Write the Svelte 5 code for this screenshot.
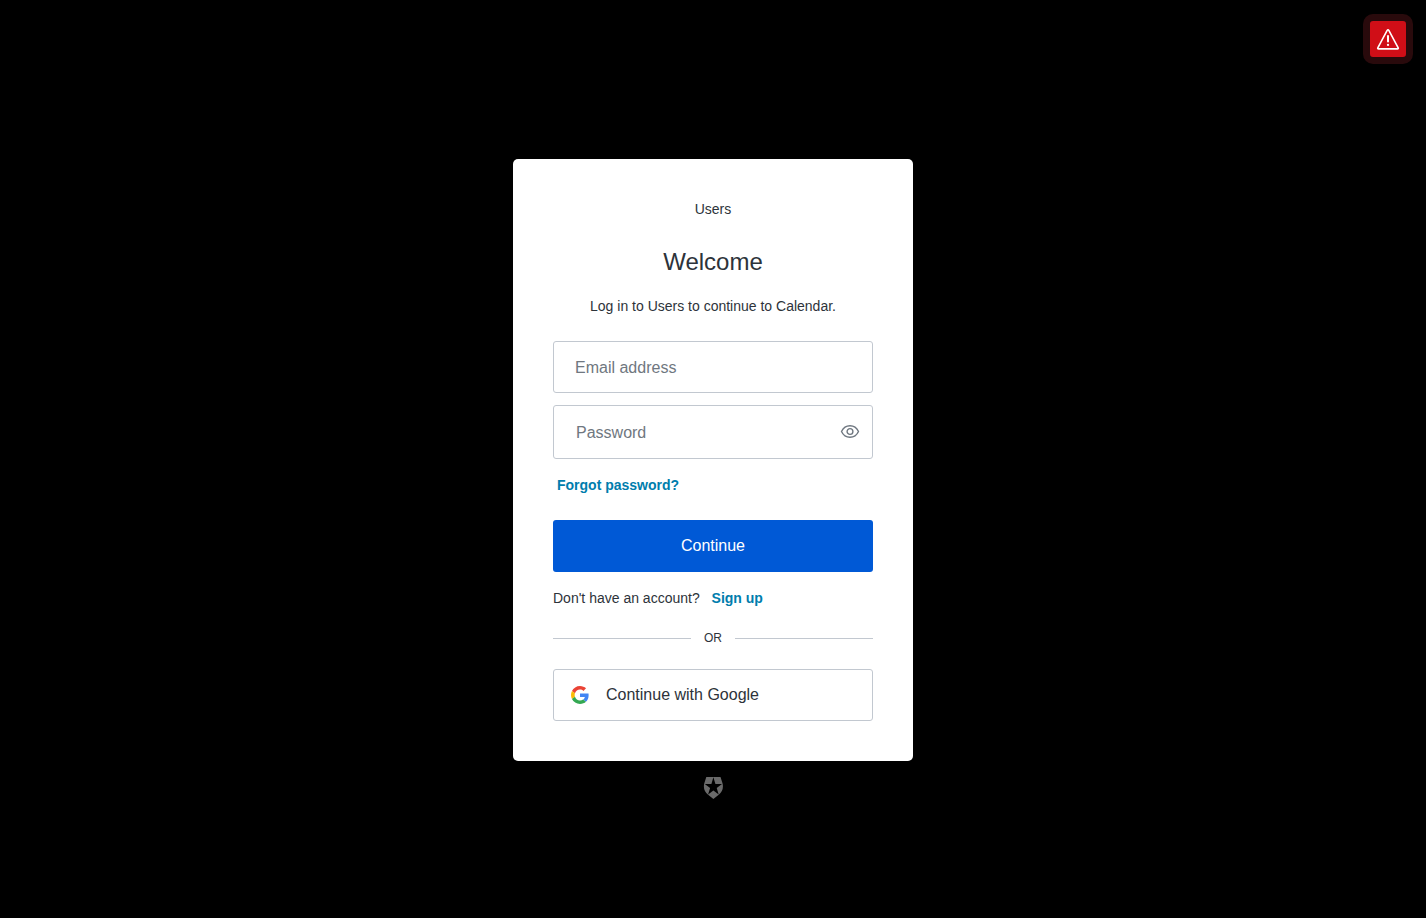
<script>
  let email = $state('');
  let password = $state('');
  let showPassword = $state(false);
</script>

<svelte:head>
  <title>Log in | Users</title>
</svelte:head>

<button class="alert" type="button" aria-label="Show warnings">
  <svg width="24" height="24" viewBox="0 0 24 24" fill="none" stroke="#fff" stroke-width="1.6" stroke-linecap="round" stroke-linejoin="round">
    <path d="M11.3 3.2 1.8 20.8c-.3.6 0 1.100.7 1.100h19c.7 0 1-.5.7-1.100L12.7 3.200c-.3-.6-1.100-.6-1.400 0Z" />
    <path d="M12 9v5.500" stroke-width="2" />
    <path d="M12 17.800v.2" stroke-width="2.200" />
  </svg>
</button>

<main class="page">
  <section class="card">
    <p class="tenant">Users</p>
    <h1>Welcome</h1>
    <p class="description">Log in to Users to continue to Calendar.</p>

    <form onsubmit={(e) => e.preventDefault()}>
      <input
        class="field"
        type="email"
        placeholder="Email address"
        aria-label="Email address"
        autocomplete="username"
        bind:value={email}
      />

      <div class="field password">
        <input
          type={showPassword ? 'text' : 'password'}
          placeholder="Password"
          aria-label="Password"
          autocomplete="current-password"
          bind:value={password}
        />
        <button
          class="toggle"
          type="button"
          aria-label={showPassword ? 'Hide password' : 'Show password'}
          onclick={() => (showPassword = !showPassword)}
        >
          <svg width="20" height="20" viewBox="0 0 20 20" fill="none" stroke="#6f7780" stroke-width="1.4">
            <path d="M1.5 9.5C3.300 5.700 6.300 3.700 10 3.700s6.700 2 8.500 5.800c-1.800 3.800-4.800 5.800-8.500 5.800s-6.700-2-8.500-5.800Z" />
            <circle cx="10" cy="9.5" r="2.900" />
          </svg>
        </button>
      </div>

      <a class="forgot" href="/reset">Forgot password?</a>
      <button class="submit" type="submit">Continue</button>
    </form>

    <p class="signup">Don't have an account? <a href="/signup">Sign up</a></p>

    <div class="divider"><span>OR</span></div>

    <button class="google" type="button">
      <svg width="18" height="18" viewBox="0 0 48 48">
        <path fill="#ea4335" d="M24 9.500c3.540 0 6.710 1.220 9.210 3.600l6.850-6.850C35.900 2.380 30.470 0 24 0 14.620 0 6.510 5.380 2.560 13.220l7.980 6.190C12.430 13.720 17.740 9.500 24 9.500z" />
        <path fill="#4285f4" d="M46.980 24.550c0-1.570-.15-3.090-.38-4.550H24v9.020h12.940c-.58 2.960-2.260 5.480-4.780 7.180l7.730 6c4.510-4.180 7.090-10.360 7.090-17.650z" />
        <path fill="#fbbc05" d="M10.530 28.590c-.48-1.450-.76-2.990-.76-4.590s.27-3.140.76-4.590l-7.980-6.190C.92 16.460 0 20.120 0 24c0 3.880.92 7.540 2.560 10.780l7.970-6.190z" />
        <path fill="#34a853" d="M24 48c6.480 0 11.930-2.130 15.890-5.810l-7.730-6c-2.150 1.450-4.920 2.300-8.160 2.300-6.260 0-11.570-4.220-13.470-9.910l-7.980 6.190C6.510 42.620 14.620 48 24 48z" />
      </svg>
      <span>Continue with Google</span>
    </button>
  </section>

  <a class="badge" href="/about" aria-label="About this login page">
    <svg width="20" height="22" viewBox="0 0 20 22">
      <path
        fill="#6a6a6a"
        fill-rule="evenodd"
        d="M3.300 0h14.200l2 6.300c1.200 4.600-.2 8.700-3.800 11.500L10.400 22l-5.300-4.200C1.500 15 .1 10.900 1.300 6.300Z
          M10.400.3 8.400 7H1.800l5.300 4-2 6.400 5.300-3.900 5.300 3.900-2-6.400L19 7h-6.600Z"
      />
    </svg>
  </a>
</main>

<style>
  :global(body) {
    background: #000;
    font-family: 'Liberation Sans', Arial, Helvetica, sans-serif;
    font-size: 14px;
    line-height: 20px;
    color: #2d333a;
  }

  button,
  input {
    font-family: inherit;
    font-size: 16px;
    box-sizing: border-box;
  }

  button {
    cursor: pointer;
  }

  svg {
    display: block;
  }

  .page {
    min-height: 100vh;
    box-sizing: border-box;
    padding: 40px 16px 0;
    display: flex;
    flex-direction: column;
    align-items: center;
    justify-content: center;
  }

  .card {
    width: 100%;
    max-width: 400px;
    box-sizing: border-box;
    padding: 40px;
    background: #fff;
    border-radius: 5px;
  }

  .tenant,
  .description {
    margin: 0;
    text-align: center;
  }

  h1 {
    margin: 28px 0 20px;
    font-size: 24px;
    line-height: 29px;
    font-weight: 400;
    text-align: center;
  }

  form {
    margin-top: 25px;
    display: flex;
    flex-direction: column;
  }

  .field {
    width: 100%;
    box-sizing: border-box;
    border: 1px solid #c2c8d0;
    border-radius: 3px;
    background: #fff;
    color: #2d333a;
  }

  input.field {
    height: 52px;
    padding: 2px 21px 0;
  }

  .password {
    margin-top: 12px;
    height: 54px;
    display: flex;
    align-items: center;
    padding-right: 12px;
  }

  .password input {
    flex: 1;
    min-width: 0;
    height: 100%;
    padding: 2px 0 0 22px;
    border: 0;
    outline: 0;
    background: none;
  }

  input::placeholder {
    color: #6f7780;
    opacity: 1;
  }

  .field:focus,
  .field:focus-within {
    border-color: #0059d6;
    outline: 0;
  }

  .toggle {
    padding: 0;
    border: 0;
    background: none;
  }

  a {
    color: #007dad;
    font-weight: 700;
    text-decoration: none;
  }

  .forgot {
    align-self: flex-start;
    margin: 16px 4px 25px;
  }

  .submit {
    height: 52px;
    border: 0;
    border-radius: 3px;
    background: #0059d6;
    color: #fff;
  }

  .submit:hover {
    background: #0050c0;
  }

  .signup {
    margin: 16px 0 20px;
  }

  .signup a {
    margin-left: 8px;
  }

  .divider {
    display: flex;
    align-items: center;
    gap: 13px;
    font-size: 12px;
  }

  .divider::before,
  .divider::after {
    content: '';
    flex: 1;
    border-top: 1px solid #c2c8d0;
  }

  .google {
    width: 100%;
    height: 52px;
    margin-top: 21px;
    padding: 0 17px;
    display: flex;
    align-items: center;
    gap: 17px;
    border: 1px solid #c2c8d0;
    border-radius: 3px;
    background: #fff;
    color: #2d333a;
  }

  .badge {
    margin-top: 16px;
  }

  .alert {
    position: fixed;
    top: 14px;
    right: 13px;
    width: 50px;
    height: 50px;
    padding: 0;
    display: flex;
    align-items: center;
    justify-content: center;
    border: 7px solid #290a0c;
    border-radius: 10px;
    background: #d00e17;
  }
</style>
